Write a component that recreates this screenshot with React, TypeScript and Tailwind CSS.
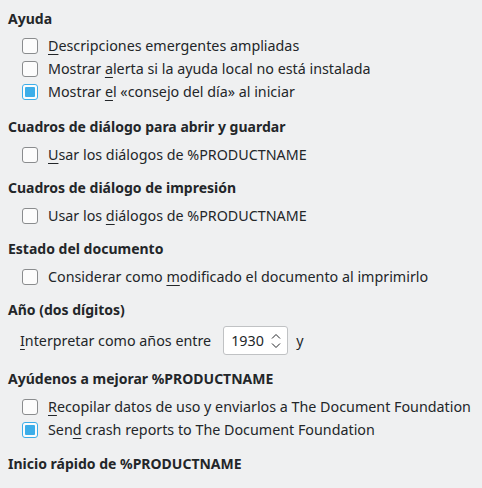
import React from 'react';

type Part = string | { u: string };

function Label({ parts }: { parts: Part[] }) {
  return (
    <span className="text-[14.3px]">
      {parts.map((p, i) =>
        typeof p === 'string' ? (
          <React.Fragment key={i}>{p}</React.Fragment>
        ) : (
          <span key={i} className="underline decoration-1 underline-offset-[3px]">
            {p.u}
          </span>
        ),
      )}
    </span>
  );
}

function CheckRow({ parts, checked = false }: { parts: Part[]; checked?: boolean }) {
  return (
    <div className="flex h-[23px] items-center pl-[22px]">
      <div
        className={
          checked
            ? 'flex h-4 w-4 items-center justify-center rounded-[3px] border border-[#3daee9] bg-[#fcfcfc]'
            : 'h-4 w-4 rounded-[3px] border border-[#8a8c8e] bg-[#fcfcfc]'
        }
      >
        {checked && <div className="h-[10px] w-[10px] rounded-[1px] bg-[#3daee9]" />}
      </div>
      <span className="ml-[10px]">
        <Label parts={parts} />
      </span>
    </div>
  );
}

function Heading({ children, className = '' }: { children: React.ReactNode; className?: string }) {
  return <div className={'flex h-5 items-center pl-2 font-bold ' + className}>{children}</div>;
}

export default function App() {
  return (
    <div
      className="h-[488px] w-[482px] overflow-hidden bg-[#eff0f1] text-[14px] text-[#232629]"
      style={{ fontFamily: '"Noto Sans", sans-serif' }}
    >
      <div className="flex flex-col pt-2">
        <Heading>Ayuda</Heading>
        <div className="mt-[6px] flex flex-col">
          <CheckRow parts={[{ u: 'D' }, 'escripciones emergentes ampliadas']} />
          <CheckRow parts={['Mostrar ', { u: 'a' }, 'lerta si la ayuda local no está instalada']} />
          <CheckRow checked parts={['Mostrar ', { u: 'e' }, 'l «consejo del día» al iniciar']} />
        </div>

        <Heading className="mt-[13px]">Cuadros de diálogo para abrir y guardar</Heading>
        <div className="mt-[7px]">
          <CheckRow parts={[{ u: 'U' }, 'sar los diálogos de %PRODUCTNAME']} />
        </div>

        <Heading className="mt-[11px]">Cuadros de diálogo de impresión</Heading>
        <div className="mt-[7px]">
          <CheckRow parts={['Usar los ', { u: 'd' }, 'iálogos de %PRODUCTNAME']} />
        </div>

        <Heading className="mt-[11px]">Estado del documento</Heading>
        <div className="mt-[7px]">
          <CheckRow parts={['Considerar como ', { u: 'm' }, 'odificado el documento al imprimirlo']} />
        </div>

        <Heading className="mt-[11px]">Año (dos dígitos)</Heading>
        <div className="mt-[7px] flex h-[29px] items-center pl-5">
          <Label parts={[{ u: 'I' }, 'nterpretar como años entre']} />
          <div className="ml-[12px] flex h-[29px] w-[65px] items-center rounded-[3px] border border-[#c0c2c4] bg-white pl-[7px] pr-[5px]">
            <span className="flex-1 text-[14.3px]">1930</span>
            <svg width="12" height="20" viewBox="0 0 12 20" fill="none" stroke="#232629" strokeWidth="1">
              <path d="M2 7.5 L6 3.5 L10 7.5" />
              <path d="M2 12.5 L6 16.5 L10 12.5" />
            </svg>
          </div>
          <span className="ml-[8px] text-[14.3px]">y</span>
        </div>

        <Heading className="mt-[13px]">Ayúdenos a mejorar %PRODUCTNAME</Heading>
        <div className="mt-[7px] flex flex-col">
          <CheckRow parts={[{ u: 'R' }, 'ecopilar datos de uso y enviarlos a The Document Foundation']} />
          <CheckRow checked parts={['Sen', { u: 'd' }, ' crash reports to The Document Foundation']} />
        </div>

        <Heading className="mt-[12px]">Inicio rápido de %PRODUCTNAME</Heading>
      </div>
    </div>
  );
}
